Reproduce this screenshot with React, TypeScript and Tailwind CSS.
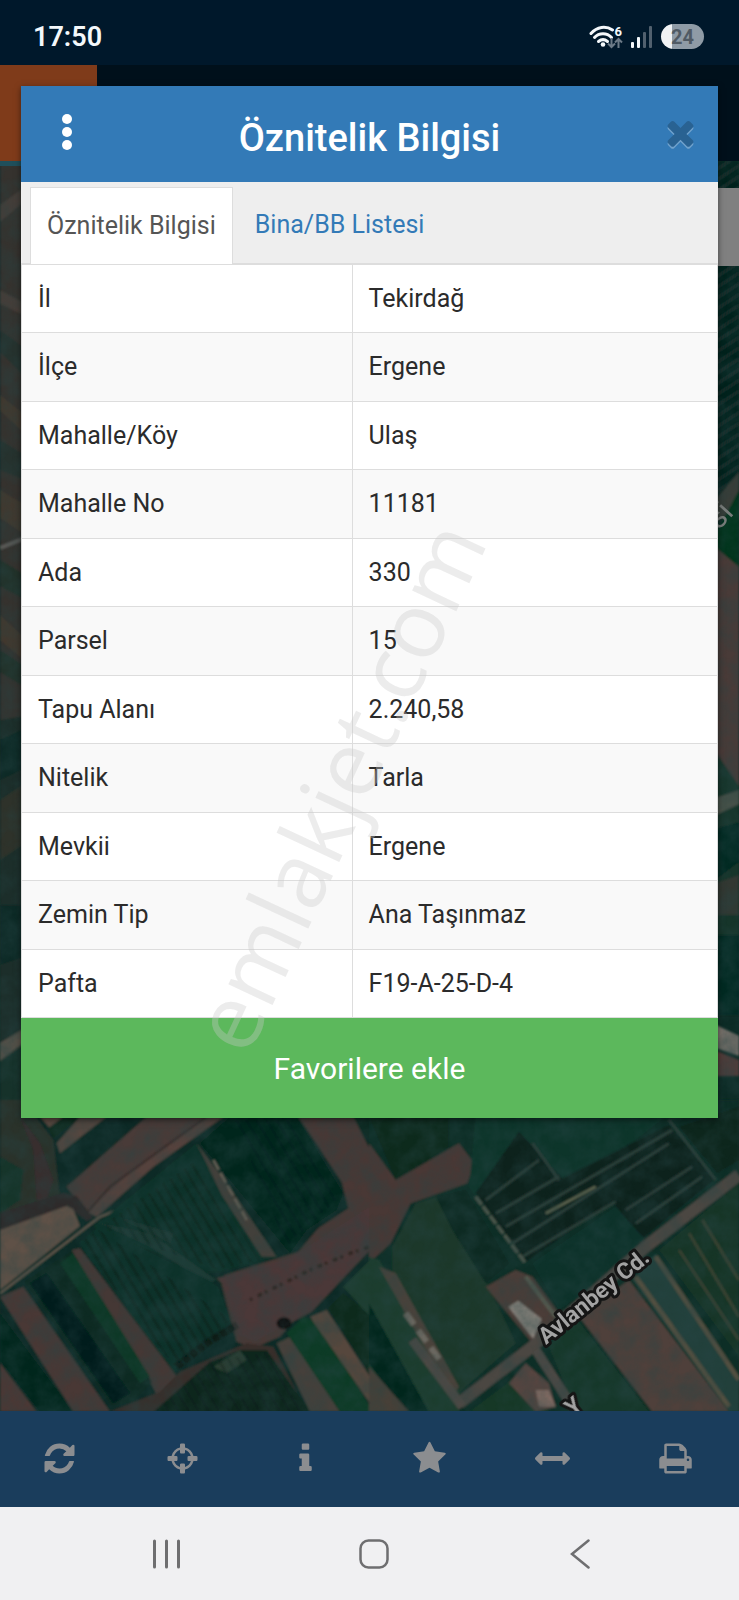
import { useState } from 'react';

const attributes = [
  ['İl', 'Tekirdağ'],
  ['İlçe', 'Ergene'],
  ['Mahalle/Köy', 'Ulaş'],
  ['Mahalle No', '11181'],
  ['Ada', '330'],
  ['Parsel', '15'],
  ['Tapu Alanı', '2.240,58'],
  ['Nitelik', 'Tarla'],
  ['Mevkii', 'Ergene'],
  ['Zemin Tip', 'Ana Taşınmaz'],
  ['Pafta', 'F19-A-25-D-4'],
];

const tabs = ['Öznitelik Bilgisi', 'Bina/BB Listesi'];

const tools = [
  {
    label: 'Yenile',
    path: 'M1639 1056q0 5-1 7-64 268-268 434.5t-478 166.5q-146 0-282.5-55t-243.5-157l-129 129q-19 19-45 19t-45-19-19-45v-448q0-26 19-45t45-19h448q26 0 45 19t19 45-19 45l-137 137q71 66 161 102t187 36q134 0 250-65t186-179q11-17 53-117 8-23 30-23h192q13 0 22.5 9.5t9.5 22.5zm25-800v448q0 26-19 45t-45 19h-448q-26 0-45-19t-19-45 19-45l138-138q-148-137-349-137-134 0-250 65t-186 179q-11 17-53 117-8 23-30 23h-199q-13 0-22.5-9.5t-9.5-22.5v-7q65-268 270-434.5t480-166.5q146 0 284 55.5t245 156.5l130-129q19-19 45-19t45 19 19 45z',
  },
  {
    label: 'Konum',
    path: 'M1325 1024h-109q-26 0-45-19t-19-45v-128q0-26 19-45t45-19h109q-32-108-112.5-188.5t-188.5-112.5v109q0 26-19 45t-45 19h-128q-26 0-45-19t-19-45v-109q-108 32-188.5 112.5t-112.5 188.5h109q26 0 45 19t19 45v128q0 26-19 45t-45 19h-109q32 108 112.5 188.5t188.5 112.5v-109q0-26 19-45t45-19h128q26 0 45 19t19 45v109q108-32 188.5-112.5t112.5-188.5zm339-192v128q0 26-19 45t-45 19h-143q-37 161-154.5 278.5t-278.5 154.5v143q0 26-19 45t-45 19h-128q-26 0-45-19t-19-45v-143q-161-37-278.5-154.5t-154.5-278.5h-143q-26 0-45-19t-19-45v-128q0-26 19-45t45-19h143q37-161 154.5-278.5t278.5-154.5v-143q0-26 19-45t45-19h128q26 0 45 19t19 45v143q161 37 278.5 154.5t154.5 278.5h143q26 0 45 19t19 45z',
  },
  {
    label: 'Bilgi',
    path: 'M1216 1344v128q0 26-19 45t-45 19h-512q-26 0-45-19t-19-45v-128q0-26 19-45t45-19h64v-384h-64q-26 0-45-19t-19-45v-128q0-26 19-45t45-19h384q26 0 45 19t19 45v576h64q26 0 45 19t19 45zm-128-1152v192q0 26-19 45t-45 19h-256q-26 0-45-19t-19-45v-192q0-26 19-45t45-19h256q26 0 45 19t19 45z',
  },
  {
    label: 'Favoriler',
    path: 'M1728 647q0 22-26 48l-363 354 86 500q1 7 1 20 0 21-10.5 35.5t-30.5 14.5q-19 0-40-12l-449-236-449 236q-22 12-40 12-21 0-31.5-14.5t-10.5-35.5q0-6 2-20l86-500-364-354q-25-27-25-48 0-37 56-46l502-73 225-455q19-41 49-41t49 41l225 455 502 73q56 9 56 46z',
  },
  {
    label: 'Ölçüm',
    path: 'M1792 896q0 26-19 45l-256 256q-19 19-45 19t-45-19-19-45v-128h-1024v128q0 26-19 45t-45 19-45-19l-256-256q-19-19-19-45t19-45l256-256q19-19 45-19t45 19 19 45v128h1024v-128q0-26 19-45t45-19 45 19l256 256q19 19 19 45z',
  },
  {
    label: 'Yazdır',
    path: 'M448 1536h896v-256h-896v256zm0-640h896v-384h-160q-40 0-68-28t-28-68v-160h-640v640zm1152 64q0-26-19-45t-45-19-45 19-19 45 19 45 45 19 45-19 19-45zm128 0v416q0 13-9.5 22.5t-22.5 9.5h-224v160q0 40-28 68t-68 28h-960q-40 0-68-28t-28-68v-160h-224q-13 0-22.5-9.5t-9.5-22.5v-416q0-79 56.5-135.5t135.5-56.5h64v-544q0-40 28-68t68-28h672q40 0 88 20t76 48l152 152q28 28 48 76t20 88v256h64q79 0 135.5 56.5t56.5 135.5z',
  },
];

function StatusBar() {
  return (
    <div className="flex h-[65px] items-center justify-between bg-[#00182b] pt-2 pr-[35px] pl-[33px]">
      <span className="text-[27px] leading-8 font-semibold text-[#f4f8fb]">17:50</span>
      <div className="flex items-center gap-2">
        <svg className="h-6 w-[34px]" viewBox="0 0 34 24" fill="none" aria-hidden="true">
          <g stroke="#f4f8fb" strokeWidth="3" strokeLinecap="round">
            <path d="M2 8.5C8 1.5 17 .5 23.500 5" />
            <path d="M5.500 12.500C10 7.500 18 7.500 22.500 12.500" />
            <path d="M9.500 16.500C12.500 14 15.500 14 18.500 16.500" />
          </g>
          <circle cx="14" cy="19.500" r="2.300" fill="#f4f8fb" />
          <text x="25.500" y="10.500" fontSize="13" fontWeight="700" fill="#f4f8fb">6</text>
          <g stroke="#6c7a87" strokeWidth="2">
            <path d="M22.500 13v9M19 18.500l3.500 3.500 3.500-3.500" />
            <path d="M29.500 23v-9M26 17.500l3.500-3.500 3.500 3.500" />
          </g>
        </svg>
        <svg className="h-6 w-[22px]" viewBox="0 0 22 24" aria-hidden="true">
          <rect x="0" y="17" width="3" height="6" rx="1" fill="#f4f8fb" />
          <rect x="6" y="12" width="3" height="11" rx="1" fill="#f4f8fb" />
          <rect x="12" y="7" width="3" height="16" rx="1" fill="#51606e" />
          <rect x="18" y="1" width="3" height="22" rx="1" fill="#51606e" />
        </svg>
        <div className="flex h-[25px] w-[43px] items-center justify-center overflow-hidden rounded-full bg-linear-to-r from-[#f0f2f4] from-25% to-[#8f9ba6] to-25% text-xl leading-none font-bold text-[#505a64]">
          24
        </div>
      </div>
    </div>
  );
}

// Satellite view, already dimmed the way it looks behind the dialog
function MapView() {
  return (
    <svg
      className="absolute inset-0 h-full w-full"
      viewBox="0 161 739 1250"
      preserveAspectRatio="xMidYMax slice"
      role="img"
      aria-label="Uydu haritası"
    >
      <defs>
        <pattern id="rows" width="9" height="9" patternUnits="userSpaceOnUse" patternTransform="rotate(-33)">
          <rect width="9" height="3" fill="#2c4a45" opacity=".35" />
        </pattern>
        <pattern id="furrows" width="26" height="26" patternUnits="userSpaceOnUse" patternTransform="rotate(-31)">
          <rect width="9" height="26" fill="#021411" opacity=".25" />
        </pattern>
        <filter id="soft" x="0" y="0" width="100%" height="100%">
          <feGaussianBlur stdDeviation="1" />
        </filter>
        <filter id="ground" x="0" y="0" width="100%" height="100%">
          <feTurbulence type="fractalNoise" baseFrequency=".05" numOctaves="4" seed="4" />
          <feColorMatrix values="0 0 0 0 .02  0 0 0 0 .06  0 0 0 0 .06  1.600 0 0 0 -.5" />
        </filter>
      </defs>
      <rect y="161" width="739" height="1250" fill="#0c2b25" />
      <g filter="url(#soft)">
        {/* left edge */}
        <path d="M0 161h30v560H0z" fill="#34322e" />
        <path d="M0 205l30-22v14L0 222zM0 290l30 16v12L0 304z" fill="#463c37" />
        <path d="M0 330l30 22v30L0 352zM0 440l30 18v24L0 470z" fill="#26322d" />
        <path d="M0 395l30 24v20L0 410zM0 490l30 18v30L0 518zM0 615l30 28v22L0 640z" fill="#43382f" />
        <path d="M0 548l30-12" stroke="#5a5a57" strokeWidth="4" />
        <path d="M0 560l30 18v24L0 586zM0 650l30 20v20L0 672z" fill="#24312b" />
        <path d="M0 720l30-5v325L0 1048z" fill="#1b2f29" />
        <path d="M0 740l30-14v40L0 780zM0 905h30v50L0 965z" fill="#0c2925" />
        <path d="M0 800l30-20v60L0 860z" fill="#2d332b" />
        <path d="M0 1043l30-18v14L0 1061z" fill="#5b5248" />
        <path d="M0 1061l30-20v120H0z" fill="#15302a" />

        {/* right edge */}
        <path d="M710 161h29v360h-29z" fill="#06211d" />
        <path d="M710 161h29v360h-29z" fill="url(#rows)" />
        <path d="M710 506l29-34v35l-29 18z" fill="#373d38" />
        <path d="M710 545l29-55v90z" fill="#04351f" />
        <path d="M710 543l29 24v220l-29-43z" fill="#4a3b39" />
        <path d="M710 744l29 42v180h-29z" fill="#17352a" />
        <path d="M710 800l29-10v14l-29 14z" fill="#4c524a" />
        <path d="M710 830l29-8v40l-29 22zM710 935h29v80h-29z" fill="#052a22" />
        <path d="M710 885l29-10v40h-29z" fill="#333832" />
        <path d="M710 1022l29 14v20l-29-10z" fill="#77716b" />
        <path d="M710 1048l29 12v16h-29z" fill="#583a37" />

        {/* fields on the left, drawn at three times map scale */}
        <g transform="translate(0 1100) scale(.33333)">
          <path d="M0 0h1110v960H0z" fill="#0a2c25" />
          <path d="M0 0h70l90 120 20 170L0 350z" fill="#29302b" />
          <path d="M60 50l60 80 40 110-20 60-30 0-10-150z" fill="#372e2e" />
          <path d="M0 170l70 40-10 90-60 40z" fill="#16352a" />
          <path d="M120 50h70l-40 35z" fill="#5b4a41" />
          <path d="M240 50h80L180 160l-10-30z" fill="#554740" />
          <path d="M190 50h50L160 115l-15-30z" fill="#08291f" />
          <path d="M440 50h230L460 200 290 350l-40-20-50-70z" fill="#4a3a37" />
          <path d="M610 50h60L460 200 290 350l-30-15 110-100z" fill="#55433d" />
          <path d="M620 50L330 260 260 340" stroke="#352b29" strokeWidth="6" fill="none" />
          <path d="M0 340l190-62 40 10 50 65-20 10-60-45L0 400z" fill="#2f2c2c" />
          <path d="M0 390l200-72 20 10 20 50L0 570z" fill="#5f5147" />
          <path d="M0 580l300-230 90-35" stroke="#65584d" strokeWidth="7" fill="none" />
          <path d="M280 380l310-250 240 340-170 45-60 0z" fill="#103329" />
          <path d="M600 130l90-80h200l140 230-20 50-90 60-50 70z" fill="#05271e" />
          <path d="M590 130l90 120 150 220h-45l-120-185z" fill="#42403a" />
          <path d="M300 370l150 30 200 140-30 10-170-110zM350 350l170 50-10 30z" fill="#1c3a34" />
          <path d="M235 430l60-50 330 160 30 20 40 110-90 80-80 70z" fill="#0b3029" />
          <path d="M215 450l25-5 295 390 0 30-60 30-30-60z" fill="#453835" />
          <path d="M75 545l140-90 240 390-60 60-60 10z" fill="#072920" />
          <path d="M90 550l50-30 250 360-50 30z" fill="#041b1c" />
          <path d="M180 490l40-30 230 370-30 20z" fill="#0c3826" />
          <path d="M0 590l70-30 260 375H220z" fill="#483836" />
          <path d="M0 640l220 295H120L0 780z" fill="#05271e" />
          <path d="M0 790l110 145H0z" fill="#4b3834" />
          <path d="M895 50h165l60 120v200l-280 340-80 35-50-20-45-170 10-30 220-70 60-70 90-60-20-80z" fill="#483836" />
          <path d="M650 535l215-60 250-160v130l-180 190-170 90-50-20-45-150z" fill="#4b3937" />
          <path d="M1060 50h50v70z" fill="#0b2b22" />
          <path d="M750 600l180-90 120-50 60-20" stroke="#2d2522" strokeWidth="10" strokeDasharray="8 18 14 10" fill="none" />
          <path d="M530 800l90-70 90-55" stroke="#071a17" strokeWidth="22" strokeDasharray="22 5" fill="none" />
          <path d="M330 935l150-60 60-60 200-85 80 10 100 195z" fill="#392f2c" />
          <path d="M460 935l170-150 90-35 80 0 130 185z" fill="#09281f" />
          <path d="M640 800l80-50 20 30-60 40z" fill="#2b3d32" />
          <path d="M830 730l40-20 150 225h-90z" fill="#45413a" />
          <path d="M860 700l50-50 50 20 150 250v15h-90z" fill="#0d3a26" />
          <path d="M930 650l50-20 130 200v80z" fill="#57473c" />
          <path d="M985 625l45-45 80 60v180z" fill="#07291f" />
          <path d="M1030 560l80-80v170z" fill="#1c3d2d" />
          <ellipse cx="852" cy="670" rx="22" ry="18" fill="#0b0909" />
          <path d="M640 180l100 180" stroke="#6b6459" strokeWidth="7" strokeDasharray="34 10" />
          <path d="M590 180l190 300-130 30L300 380zM700 60h190l130 230-160 150zM235 430l60-40 400 270-170 140zM460 935l170-150 170-30 130 180z" fill="url(#furrows)" />
        </g>

        {/* fields on the right, same scale */}
        <g transform="translate(369 1100) scale(.33333)">
          <path d="M0 0h1110v960H0z" fill="#0c2e26" />
          <path d="M0 50h240v90l-160 100z" fill="#09291f" />
          <path d="M0 130l80 110 190-110 45 60-20 60-170 60-60 120-65 60z" fill="#4a3936" />
          <path d="M70 440l70-130 60-20 150 250 90 190-150 130-20 20-200-330z" fill="#1c382a" />
          <path d="M200 290l90-20 130 220-70 60-100-160z" fill="#082a22" />
          <path d="M320 50h570L510 340l-60 130-150-210z" fill="#10352b" />
          <path d="M320 280L450 95l130 140L900 75l140 160-220 180-90-110-260 180z" fill="#09211d" />
          <g stroke="#2e413a" strokeWidth="8" fill="none">
            <path d="M350 300l160-120M380 340l190-110M410 380L910 90M430 430L900 130M460 470l280-165M770 330l200-130M800 370l200-140" />
            <path d="M490 130l80 110M900 60l140 180" />
          </g>
          <path d="M530 340l150-80" stroke="#5e6550" strokeWidth="8" />
          <path d="M320 290l150 200" stroke="#4b564c" strokeWidth="10" strokeDasharray="30 6" />
          <path d="M490 490l250-170 90 100-20 40-240 170z" fill="#0a312c" />
          <path d="M350 560l90-50 50 20 80 110-80 90z" fill="#4b3c37" />
          <path d="M470 530l90 120" stroke="#565b50" strokeWidth="12" />
          <path d="M418 620l30-18 70 55-25 60z" fill="#858079" />
          <path d="M0 470l30 10 240 390v65H0z" fill="#1c3d2d" />
          <path d="M30 500l50 20 190 340-20 30z" fill="#4a433a" />
          <path d="M110 640l110 150" stroke="#6b6860" strokeWidth="18" strokeDasharray="42 22" />
          <path d="M0 610l180 325H100L0 790z" fill="#06271f" />
          <path d="M0 800l120 135H0z" fill="#474039" />
          <path d="M300 935l160-120 80 120z" fill="#133725" />
          <path d="M420 850l50-60 70 60 20 70-60 15z" fill="#564540" />
          <path d="M500 870l40 0 20 50-50 0z" fill="#7b6860" />
          <path d="M540 740l70-100 230 295H620z" fill="#17382a" />
          <path d="M630 650l150-110 300 395H850z" fill="#4f403b" />
          <path d="M790 540l70-80 250 370v105h-30z" fill="#20403a" />
          <path d="M860 470l250 370M800 530l280 390" stroke="#534f40" strokeWidth="14" />
          <path d="M870 450l240-200v520z" fill="#153427" />
          <path d="M960 400l150 250M1000 360l110 180M930 450l180 270" stroke="#3b4230" strokeWidth="9" />
          <path d="M1045 220L930 80l180-60v160z" fill="#07271f" />
          <path d="M1110 225L830 440 490 740 270 910" stroke="#4c4642" strokeWidth="36" fill="none" />
          <path d="M500 750l110 170M130 720l150 200" stroke="#4e4944" strokeWidth="28" />
        </g>
      </g>
      <rect y="161" width="739" height="1250" filter="url(#ground)" opacity=".5" />

      {/* street names */}
      <g fill="#a3a3a3" stroke="#151515" strokeWidth="6" strokeLinejoin="round" paintOrder="stroke" fontWeight="700">
        <text fontSize="23" transform="translate(546 1345) rotate(-39)">Avlanbey Cd.</text>
        <text fontSize="23" transform="translate(573 1417) rotate(-39)">Y</text>
      </g>
      <text fontSize="31" fill="#777c7a" transform="translate(708 543) rotate(-48)">esi</text>
      <rect x="660" y="188" width="79" height="78" fill="#808080" />
    </svg>
  );
}

function AppPage() {
  return (
    <div className="col-start-1 row-start-1 flex flex-col">
      <div className="z-10 -mb-[5px] flex items-start">
        <button className="h-[101px] w-[97px] border-b-[5px] border-[#1f4f5b] bg-[#7f3b1a]" aria-label="Menü" />
        <div className="h-24 flex-1 bg-[#00101b]" />
      </div>
      <div className="relative flex-1">
        <MapView />
      </div>
      <div className="grid h-24 grid-cols-6 bg-[#1a3d5c]">
        {tools.map((tool) => (
          <button key={tool.label} aria-label={tool.label} className="flex items-center justify-center pr-1 pb-0.5 text-[#8b8d90]">
            <svg className="size-[35px]" viewBox="0 0 1792 1792" fill="currentColor">
              <path d={tool.path} />
            </svg>
          </button>
        ))}
      </div>
    </div>
  );
}

function AttributeDialog() {
  const [activeTab, setActiveTab] = useState(tabs[0]);

  return (
    <div
      role="dialog"
      aria-labelledby="dialog-title"
      className="z-20 col-start-1 row-start-1 mx-[21px] mt-[21px] mb-8 self-start shadow-[0_2px_6px_rgba(0,0,0,0.5)]"
    >
      <div className="flex h-24 items-center bg-[#337ab7] px-[18px]">
        <button aria-label="Seçenekler" className="flex h-14 w-14 flex-col items-center justify-center gap-[3px] pb-1">
          <span className="size-2.5 rounded-full bg-white" />
          <span className="size-2.5 rounded-full bg-white" />
          <span className="size-2.5 rounded-full bg-white" />
        </button>
        <h1 id="dialog-title" className="flex-1 pt-2 pr-4 text-center text-[38px] leading-10 font-medium text-white">
          Öznitelik Bilgisi
        </h1>
        <button aria-label="Kapat" className="flex h-14 w-10 items-center justify-center pb-1 text-[#296292]">
          <svg className="size-[39px] drop-shadow-[0_2px_0_rgba(255,255,255,0.3)]" viewBox="0 0 1792 1792" fill="currentColor">
            <path d="M1490 1322q0 40-28 68l-136 136q-28 28-68 28t-68-28l-294-294-294 294q-28 28-68 28t-68-28l-136-136q-28-28-28-68t28-68l294-294-294-294q-28-28-28-68t28-68l136-136q28-28 68-28t68 28l294 294 294-294q28-28 68-28t68 28l136 136q28 28 28 68t-28 68l-294 294 294 294q28 28 28 68z" />
          </svg>
        </button>
      </div>

      <div role="tablist" className="flex h-[82px] items-end gap-1.5 border-b border-[#ddd] bg-[#eee] pl-[9px]">
        {tabs.map((tab) => (
          <button
            key={tab}
            role="tab"
            aria-selected={tab === activeTab}
            onClick={() => setActiveTab(tab)}
            className={
              tab === activeTab
                ? '-mb-px h-[77px] border border-b-0 border-[#ddd] bg-white px-4 text-[25px] text-[#555]'
                : 'h-[76px] px-4 text-[25px] text-[#337ab7]'
            }
          >
            {tab}
          </button>
        ))}
      </div>

      <table className="w-full table-fixed border-collapse bg-white text-[25px] text-[#2b2b2b]">
        <tbody>
          {attributes.map(([name, value]) => (
            <tr key={name} className="h-[68px] border border-[#ddd] even:h-[69px] even:bg-[#f9f9f9]">
              <th scope="row" className="w-[47.5%] border-r border-[#ddd] px-4 text-left font-normal">
                {name}
              </th>
              <td className="px-4">{value}</td>
            </tr>
          ))}
        </tbody>
      </table>

      <button className="h-[100px] w-full bg-[#5cb85c] text-[30px] text-white">Favorilere ekle</button>
    </div>
  );
}

function NavigationBar() {
  return (
    <div className="flex h-[93px] items-center justify-between bg-[#f0f0f2] pr-36 pl-38 text-[#6e6e70]">
      <button aria-label="Son uygulamalar">
        <svg className="size-[30px]" viewBox="0 0 30 30" stroke="currentColor" strokeWidth="3" strokeLinecap="round">
          <path d="M2.500 2v26M14.500 2v26M26.500 2v26" />
        </svg>
      </button>
      <button aria-label="Ana ekran">
        <svg className="size-[30px]" viewBox="0 0 30 30" fill="none" stroke="currentColor" strokeWidth="2.500">
          <rect x="1.500" y="1.500" width="27" height="27" rx="8" />
        </svg>
      </button>
      <button aria-label="Geri">
        <svg className="size-[30px]" viewBox="0 0 30 30" fill="none" stroke="currentColor" strokeWidth="2.500" strokeLinecap="round">
          <path d="M23.500 1.500L7 15l16.500 13.500" />
        </svg>
      </button>
    </div>
  );
}

function App() {
  return (
    <div lang="tr" className="relative flex min-h-screen flex-col overflow-hidden font-['Roboto',sans-serif]">
      <StatusBar />
      <div className="grid flex-1">
        <AppPage />
        <AttributeDialog />
      </div>
      <NavigationBar />
      <div className="pointer-events-none absolute inset-0 z-30 flex items-center justify-center pr-[66px] pb-[30px]">
        <span className="-rotate-65 font-['Open_Sans',sans-serif] text-[91px] leading-none text-[#c8c8c8]/35">
          emlakjet.com
        </span>
      </div>
    </div>
  );
}

export default App;
